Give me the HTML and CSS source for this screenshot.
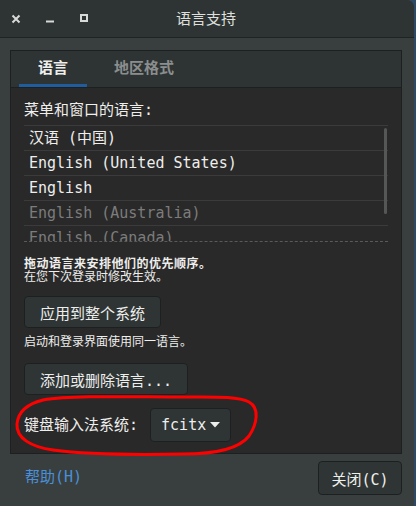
FILE: index.html
```html
<!DOCTYPE html>
<html lang="zh-CN">
<head>
<meta charset="utf-8">
<title>语言支持</title>
<link rel="stylesheet" href="styles.css">
</head>
<body>
<div class="window">
  <div class="titlebar">
    <div class="controls">
      <svg class="ctl" width="10" height="10" viewBox="0 0 10 10"><path d="M1.5 1.5 L8.5 8.5 M8.5 1.5 L1.5 8.5" stroke="#d8dad8" stroke-width="2" fill="none"/></svg>
      <svg class="ctl" width="10" height="10" viewBox="0 0 10 10"><rect x="1" y="6.5" width="8" height="2" fill="#d8dad8"/></svg>
      <svg class="ctl" width="10" height="10" viewBox="0 0 10 10"><rect x="2" y="1" width="6" height="6" stroke="#d8dad8" stroke-width="2" fill="none"/></svg>
    </div>
    <div class="title">语言支持</div>
    <div></div>
  </div>
  <div class="body">
    <div class="notebook">
      <div class="tabs">
        <div class="tab active">语言</div>
        <div class="tab">地区格式</div>
      </div>
      <div class="page">
        <div class="label">菜单和窗口的语言:</div>
        <div class="list">
          <div class="row">汉语 (中国)</div>
          <div class="row">English (United States)</div>
          <div class="row">English</div>
          <div class="row dim">English (Australia)</div>
          <div class="row dim">English (Canada)</div>
          <div class="scrollbar"></div>
        </div>
        <p class="hint first"><b>拖动语言来安排他们的优先顺序。</b><br>在您下次登录时修改生效。</p>
        <button class="btn">应用到整个系统</button>
        <p class="hint second">启动和登录界面使用同一语言。</p>
        <button class="btn">添加或删除语言...</button>
        <div class="im-row">
          <span class="im-label">键盘输入法系统:</span>
          <button class="btn combo">fcitx<svg width="10" height="6" viewBox="0 0 10 6"><path d="M0 0 L10 0 L5 5.5 Z" fill="#eeeeec"/></svg></button>
        </div>
      </div>
    </div>
    <div class="footer">
      <a class="help" href="#">帮助(H)</a>
      <button class="btn close">关闭(C)</button>
    </div>
  </div>
  <svg class="annot" width="250" height="64" viewBox="0 0 250 64">
    <path d="M30 6 C60 1 120 3 170 3 C200 3 225 2 236 8 C247 14 244 30 236 42 C226 55 200 60 170 60 C120 61 70 60 40 56 C18 53 3 44 4 30 C5 18 14 10 30 6 Z" stroke="#ff0000" stroke-width="3" fill="none"/>
  </svg>
</div>
</body>
</html>
```
FILE: styles.css
```css
* { box-sizing: border-box; }
html, body { margin: 0; padding: 0; }
body {
  width: 416px;
  height: 506px;
  overflow: hidden;
  background: #2c4a66;
  font-family: "DejaVu Sans Mono", "Noto Sans CJK SC", monospace;
  font-size: 15px;
  color: #eeeeec;
}
.window {
  position: relative;
  width: 414px;
  height: 506px;
  background: #393f3f;
  border-top-right-radius: 7px;
  overflow: hidden;
}
.titlebar {
  height: 38px;
  background: #2e3333;
  border-bottom: 1px solid #1f2323;
  display: grid;
  grid-template-columns: 1fr auto 1fr;
  align-items: center;
}
.controls {
  display: flex;
  align-items: center;
  gap: 24px;
  padding-left: 11px;
}
.ctl { display: block; }
.title {
  color: #dfe0de;
  font-size: 15px;
  line-height: 20px;
  margin-left: -2px;
}
.body {
  padding: 12px 12px 0 10px;
}
.notebook {
  border: 1px solid #1c2020;
  background: #292929;
}
.tabs {
  display: flex;
  gap: 8px;
  padding-left: 8px;
  background: #2e3434;
  border-bottom: 1px solid #1c2020;
  height: 37px;
}
.tab {
  height: 36px;
  padding: 0 19px;
  text-align: center;
  font-weight: bold;
  color: #8b8e8e;
  line-height: 34px;
  border-bottom: 3px solid transparent;
  white-space: nowrap;
}
.tab.active {
  color: #eeeeec;
  border-bottom-color: #215d9c;
}
.page {
  padding: 12px 13px 11px 13px;
}
.label {
  line-height: 20px;
  height: 20px;
}
.list {
  position: relative;
  margin-top: 5px;
  width: 364px;
  height: 117px;
  overflow: hidden;
  border-top: 1px solid #3b3b3b;
  border-bottom: 1px dashed #5a5a5a;
}
.row {
  height: 25px;
  line-height: 24px;
  padding-left: 5px;
  border-bottom: 1px solid #3b3b3b;
  white-space: pre;
}
.row.dim { color: #7c7c7c; }
.scrollbar {
  position: absolute;
  right: 1px;
  top: 2px;
  width: 3px;
  height: 86px;
  border-radius: 2px;
  background: #555757;
}
.hint {
  margin: 0;
  font-size: 12px;
  line-height: 13px;
  color: #eeeeec;
}
.hint b { letter-spacing: 0.5px; }
.hint.first { margin-top: 16px; }
.hint.second { margin-top: 8px; margin-bottom: 14px; }
.btn {
  display: flex;
  align-items: center;
  justify-content: center;
  height: 32px;
  padding: 0 15px;
  background: #2f3535;
  border: 1px solid #1c2020;
  border-radius: 4px;
  color: #eeeeec;
  font-family: inherit;
  font-size: 15px;
  white-space: pre;
}
.hint.first + .btn { margin-top: 12px; }
.im-row {
  margin-top: 13px;
  display: flex;
  align-items: center;
  gap: 12px;
}
.im-label { line-height: 20px; }
.combo {
  height: 34px;
  width: 81px;
  padding: 0 10px;
  justify-content: space-between;
}
.footer {
  display: flex;
  justify-content: space-between;
  align-items: flex-start;
  padding-top: 7px;
}
.help {
  color: #4a90d9;
  text-decoration: none;
  margin-left: 15px;
  margin-top: 6px;
  line-height: 20px;
}
.close {
  width: 84px;
  height: 34px;
  padding: 0;
}
.annot {
  position: absolute;
  left: 13px;
  top: 394px;
}
```
